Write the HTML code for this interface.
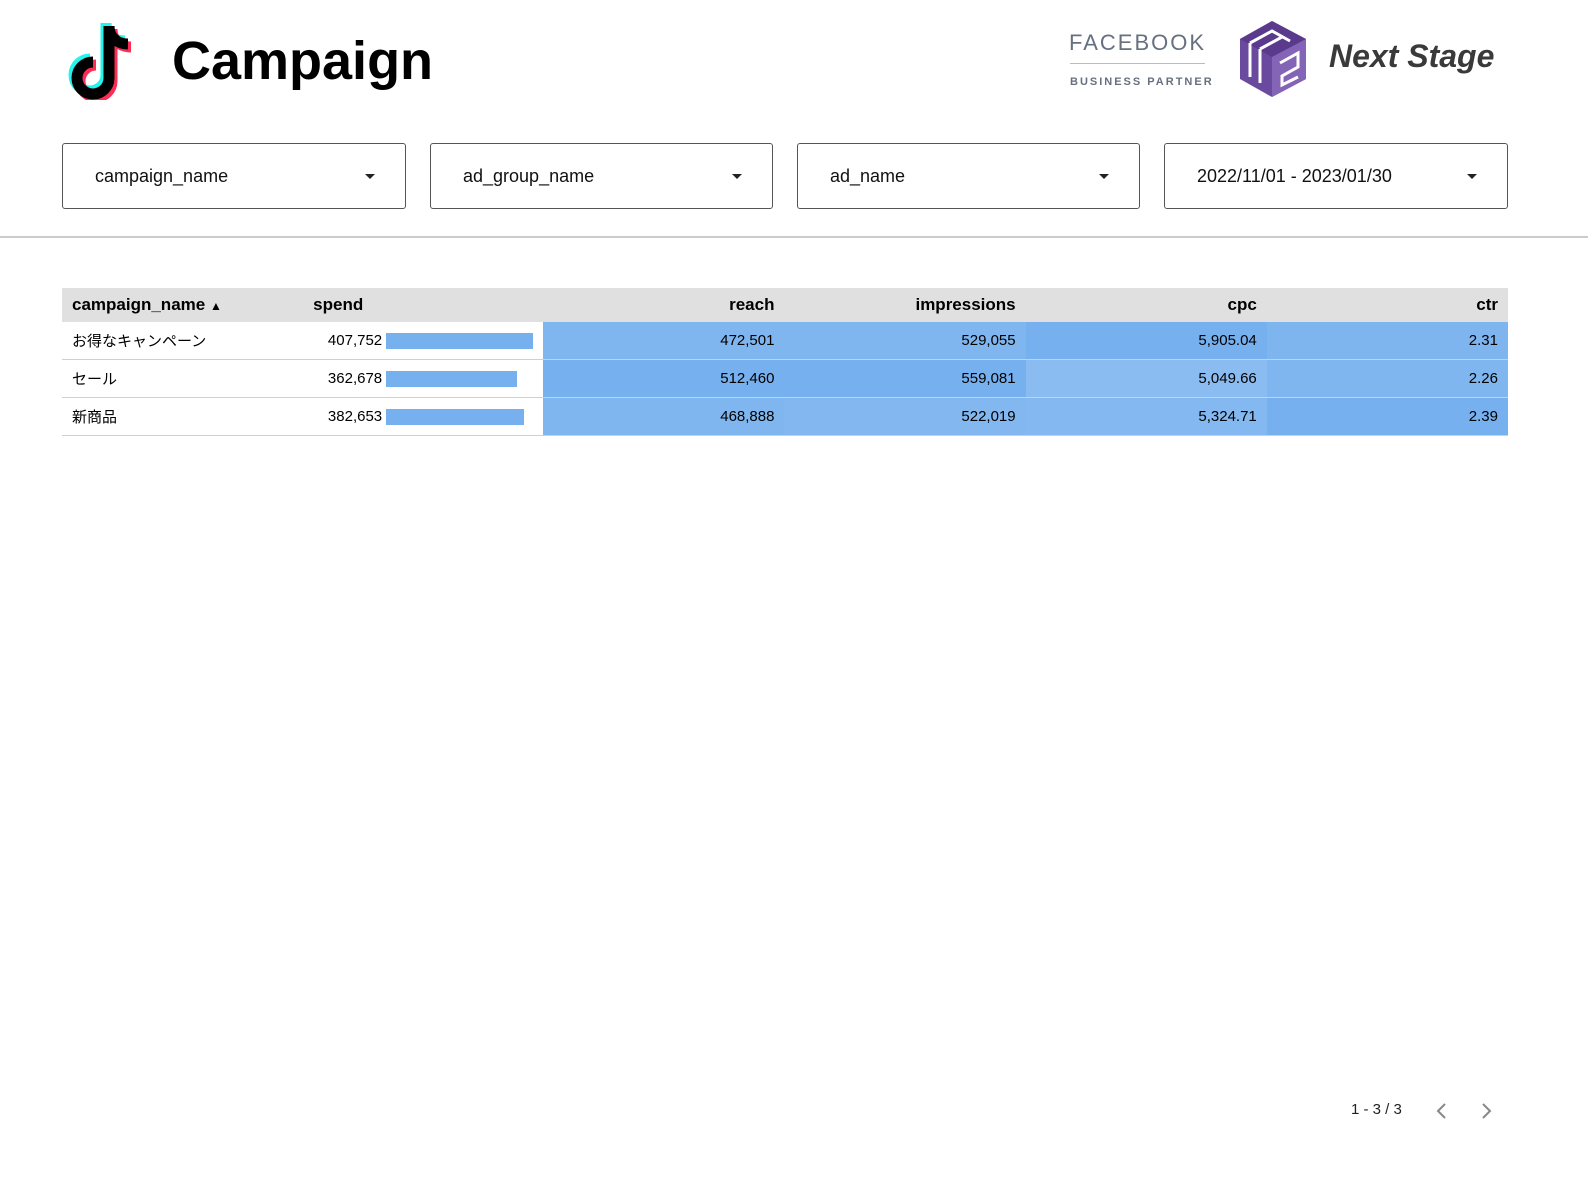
<!DOCTYPE html>
<html><head><meta charset="utf-8"><style>
body{margin:0;width:1588px;height:1188px;background:#fff;font-family:"Liberation Sans","Noto Sans CJK JP",sans-serif;position:relative;overflow:hidden;color:#000}
.abs{position:absolute}
.dd{position:absolute;top:143px;border:1px solid #555;border-radius:3px;box-sizing:border-box;height:66px}
.dd span{position:absolute;left:32px;top:22px;font-size:18px;color:#111}
.dd i{position:absolute;right:30px;top:30px;width:0;height:0;border-left:5px solid transparent;border-right:5px solid transparent;border-top:5px solid #222}
table{position:absolute;left:62px;top:288px;border-collapse:collapse;width:1446px;font-size:15px}
th{background:#e0e0e0;height:34px;font-weight:bold;font-size:17px;padding:0 10px;text-align:right}
td{height:37px;padding:0 10px;text-align:right;border-bottom:1px solid #d0d0d0}
col{width:241px}
.bar{display:inline-block;height:16px;background:#76b0ee;vertical-align:middle}
</style></head><body>
<svg class="abs" style="left:66px;top:22px" width="72" height="78" viewBox="0 0 72 78">
<g fill="none" stroke-width="11" stroke-linecap="butt">
<path d="M43 4 V56 A16 16 0 1 1 27 40" stroke="#25f4ee" transform="translate(-3,-3)"/>
<path d="M43 4 C43 16 52 22 62 22" stroke="#25f4ee" transform="translate(-3,-3)"/>
<path d="M43 4 V56 A16 16 0 1 1 27 40" stroke="#fe2c55" transform="translate(3,3)"/>
<path d="M43 4 C43 16 52 22 62 22" stroke="#fe2c55" transform="translate(3,3)"/>
<path d="M43 4 V56 A16 16 0 1 1 27 40" stroke="#000"/>
<path d="M43 4 C43 16 52 22 62 22" stroke="#000"/>
</g></svg>
<div class="abs" style="left:172px;top:30px;font-size:54px;font-weight:bold">Campaign</div>
<div class="abs" style="left:1069px;top:30px;font-size:22px;letter-spacing:2px;color:#67707f">FACEBOOK</div>
<div class="abs" style="left:1070px;top:63px;width:135px;height:1px;background:#b8bcc4"></div>
<div class="abs" style="left:1070px;top:76px;font-size:11px;font-weight:bold;letter-spacing:2px;color:#67707f">BUSINESS PARTNER</div>
<svg class="abs" style="left:1238px;top:19px" width="70" height="80" viewBox="0 0 70 80">
<polygon points="2,20 34,2 68,20 68,60 34,78 2,60" fill="#6a4a9e"/>
<polygon points="34,2 68,20 34,38 2,20" fill="#5a3a8c"/>
<polygon points="34,38 68,20 68,60 34,78" fill="#8464b6"/>
<g fill="none" stroke="#fff" stroke-width="3">
<path d="M12 24 V58 M22 30 V64 M22 30 L44 18 M12 24 L34 12 L52 22"/>
<path d="M42 44 L60 34 V48 L44 57 V66 L60 58"/>
</g>
</svg>
<div class="abs" style="left:1329px;top:38px;font-size:32px;font-weight:bold;font-style:italic;color:#3a3a3a">Next Stage</div>
<div class="dd" style="left:62px;width:344px"><span>campaign_name</span><i></i></div>
<div class="dd" style="left:430px;width:343px"><span>ad_group_name</span><i></i></div>
<div class="dd" style="left:797px;width:343px"><span>ad_name</span><i></i></div>
<div class="dd" style="left:1164px;width:344px"><span>2022/11/01 - 2023/01/30</span><i></i></div>
<div class="abs" style="left:0;top:236px;width:1588px;height:2px;background:#ccc"></div>
<table>
<colgroup><col><col style="width:240px"><col><col><col><col></colgroup>
<tr><th style="text-align:left">campaign_name <span style="font-size:12px">▲</span></th><th style="text-align:left">spend</th><th>reach</th><th>impressions</th><th>cpc</th><th>ctr</th></tr>
<tr><td style="text-align:left">お得なキャンペーン</td><td style="padding-right:10px">407,752 <span class="bar" style="width:147px"></span></td><td style="background:#80b6ef">472,501</td><td style="background:#80b6ef">529,055</td><td style="background:#76b0ee">5,905.04</td><td style="background:#7fb5ef">2.31</td></tr>
<tr><td style="text-align:left">セール</td><td>362,678 <span class="bar" style="width:131px;margin-right:16px"></span></td><td style="background:#76b0ee">512,460</td><td style="background:#76b0ee">559,081</td><td style="background:#8bbcf1">5,049.66</td><td style="background:#80b6ef">2.26</td></tr>
<tr><td style="text-align:left">新商品</td><td>382,653 <span class="bar" style="width:138px;margin-right:9px"></span></td><td style="background:#80b6ef">468,888</td><td style="background:#82b7ef">522,019</td><td style="background:#83b8f0">5,324.71</td><td style="background:#76b0ee">2.39</td></tr>
</table>
<div class="abs" style="left:1351px;top:1101px;font-size:15px;color:#222">1 - 3 / 3</div>
<svg class="abs" style="left:1433px;top:1101px" width="70" height="20"><path d="M12 3 L5 10 L12 17" stroke="#888" stroke-width="2" fill="none"/><path d="M50 3 L57 10 L50 17" stroke="#888" stroke-width="2" fill="none"/></svg>
</body></html>
